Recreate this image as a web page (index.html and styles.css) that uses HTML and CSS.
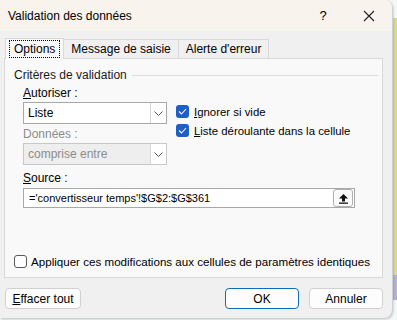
FILE: index.html
```html
<!DOCTYPE html>
<html lang="fr">
<head>
    <meta charset="UTF-8">
    <title>Validation des données</title>
    <link rel="stylesheet" href="styles.css">
</head>
<body>
    <div class="fenetre">
        <div class="titre">
            <span class="titre-texte">Validation des données</span>
            <span class="aide">?</span>
            <span class="fermer">
                <svg width="12" height="12" viewBox="0 0 12 12"><path d="M1 1L11 11M11 1L1 11" stroke="#222" stroke-width="1.1" fill="none"/></svg>
            </span>
        </div>

        <div class="corps">
            <div class="onglets">
                <div class="onglet actif"><span class="focus">Options</span></div>
                <div class="onglet">Message de saisie</div>
                <div class="onglet">Alerte d'erreur</div>
            </div>

            <div class="panneau">
                <div class="groupe">
                    <span>Critères de validation</span>
                    <div class="trait"></div>
                </div>

                <div class="ligne">
                    <div class="colonne">
                        <div class="etiquette"><u>A</u>utoriser :</div>
                        <div class="combo">
                            <span class="valeur">Liste</span>
                            <span class="fleche"><svg width="9" height="5" viewBox="0 0 9 5"><path d="M0.5 0.5L4.5 4.5L8.5 0.5" stroke="#555" fill="none"/></svg></span>
                        </div>
                        <div class="etiquette gris">Données :</div>
                        <div class="combo inactif">
                            <span class="valeur">comprise entre</span>
                            <span class="fleche"><svg width="9" height="5" viewBox="0 0 9 5"><path d="M0.5 0.5L4.5 4.5L8.5 0.5" stroke="#555" fill="none"/></svg></span>
                        </div>
                    </div>
                    <div class="cases">
                        <label class="case"><span class="coche"><svg width="9" height="7" viewBox="0 0 9 7"><path d="M1 3.5L3.5 6L8 1" stroke="#fff" stroke-width="1.1" fill="none"/></svg></span><span><u>I</u>gnorer si vide</span></label>
                        <label class="case"><span class="coche"><svg width="9" height="7" viewBox="0 0 9 7"><path d="M1 3.5L3.5 6L8 1" stroke="#fff" stroke-width="1.1" fill="none"/></svg></span><span><u>L</u>iste déroulante dans la cellule</span></label>
                    </div>
                </div>

                <div class="etiquette source-label"><u>S</u>ource :</div>
                <div class="source">
                    <span class="formule">='convertisseur temps'!$G$2:$G$361</span>
                    <span class="reduire"><svg width="11" height="11" viewBox="0 0 11 11"><path d="M5.5 1L10 5.5H7V8.5H4V5.5H1Z" fill="#111"/><rect x="1" y="9.5" width="9" height="1.3" fill="#111"/></svg></span>
                </div>

                <label class="case appliquer"><span class="coche vide"></span><span>Appliquer ces modifications aux cellules de paramètres identiques</span></label>
            </div>

            <div class="boutons">
                <button class="bouton"><u>E</u>ffacer tout</button>
                <div class="espace"></div>
                <button class="bouton defaut">OK</button>
                <button class="bouton">Annuler</button>
            </div>
        </div>
    </div>
</body>
</html>
```

FILE: styles.css
```css
body {
    margin: 0;
    width: 397px;
    height: 320px;
    overflow: hidden;
    font-family: "Liberation Sans", Arial, sans-serif;
    font-size: 11px;
    color: #000;
    background:
        linear-gradient(to bottom, transparent 18px, #d8dc8c 18px, #d8dc8c 275px, #b7b0dc 275px, #b7b0dc 300px, transparent 300px) no-repeat 393px 0 / 4px 320px,
        #f4f8f8;
}

.fenetre {
    width: 392px;
    height: 318px;
    background-color: #f0f0f0;
    border-radius: 0 8px 8px 0;
    box-shadow: 1px 1px 3px rgba(0, 0, 0, 0.25);
    overflow: hidden;
}

.titre {
    height: 31px;
    background-color: #f8f3ec;
    display: flex;
    align-items: center;
    padding-left: 8px;
}

.titre-texte {
    font-size: 12px;
    flex: 1;
}

.aide {
    font-size: 13px;
    width: 46px;
    text-align: center;
}

.fermer {
    width: 46px;
    display: flex;
    justify-content: center;
}

.corps {
    padding: 7px 9px 0 4px;
}

.onglets {
    display: flex;
    padding-left: 1px;
    height: 20px;
    align-items: flex-end;
    font-size: 12px;
}

.onglet {
    height: 18px;
    border: 1px solid #d9d9d9;
    border-bottom: none;
    border-left: none;
    padding: 0 7px;
    display: flex;
    align-items: center;
    background-color: #f0f0f0;
}

.onglet.actif {
    height: 20px;
    border-left: 1px solid #d9d9d9;
    background-color: #f9f9f9;
    margin-bottom: -1px;
    position: relative;
    padding: 0 3px;
}

.focus {
    border: 1px dotted #000;
    padding: 1px 4px;
}

.panneau {
    height: 220px;
    background-color: #f9f9f9;
    border: 1px solid #d9d9d9;
    padding: 9px 0 0 9px;
    box-sizing: border-box;
}

.groupe {
    display: flex;
    align-items: center;
    font-size: 12px;
    color: #1a1a1a;
}

.trait {
    flex: 1;
    height: 1px;
    background-color: #dcdcdc;
    margin: 1px 4px 0 5px;
}

.ligne {
    display: flex;
    padding-left: 9px;
}

.colonne {
    width: 144px;
}

.etiquette {
    font-size: 12px;
    height: 17px;
    line-height: 17px;
    margin-top: 3px;
}

.gris {
    color: #8c8c8c;
    margin-top: 2px;
}

.combo {
    height: 20px;
    border: 1px solid #a8a8a8;
    background-color: #fff;
    display: flex;
    align-items: center;
}

.combo .valeur {
    flex: 1;
    padding-left: 4px;
    font-size: 12px;
}

.combo .fleche {
    width: 15px;
    height: 20px;
    border-left: 1px solid #d6d6d6;
    display: flex;
    align-items: center;
    justify-content: center;
}

.combo.inactif {
    background-color: #eeeeee;
    border-color: #c8c8c8;
    color: #8c8c8c;
}

.combo.inactif .fleche {
    background-color: #fff;
}

.cases {
    padding: 23px 0 0 9px;
    display: flex;
    flex-direction: column;
    gap: 6px;
    font-size: 11.4px;
}

.case {
    display: flex;
    align-items: center;
    gap: 5px;
    height: 13px;
}

.coche {
    width: 13px;
    height: 13px;
    border-radius: 3px;
    background-color: #1f5fc4;
    display: flex;
    align-items: center;
    justify-content: center;
    box-sizing: border-box;
    flex: none;
}

.coche.vide {
    background-color: #fff;
    border: 1px solid #5a5a5a;
}

.source-label {
    margin: 5px 0 0 9px;
}

.source {
    margin: 1px 0 0 9px;
    width: 332px;
    height: 20px;
    border: 1px solid #a8a8a8;
    background-color: #fff;
    display: flex;
    align-items: center;
    box-sizing: border-box;
}

.formule {
    flex: 1;
    padding-left: 5px;
    font-size: 11px;
}

.reduire {
    width: 18px;
    height: 16px;
    border: 1px solid #b0b0b0;
    border-radius: 3px;
    margin-right: 1px;
    display: flex;
    align-items: center;
    justify-content: center;
    background-color: #fbfbfb;
}

.appliquer {
    margin-top: 47px;
    font-size: 11.6px;
    gap: 4px;
}

.boutons {
    display: flex;
    margin-top: 10px;
    padding-left: 1px;
    gap: 10px;
}

.espace {
    flex: 1;
}

.bouton {
    font-family: "Liberation Sans", Arial, sans-serif;
    font-size: 12px;
    height: 21px;
    width: 74px;
    border: 1px solid #d0d0d0;
    border-radius: 4px;
    background-color: #fdfdfd;
    padding: 0;
    color: #000;
}

.bouton:first-child {
    width: 76px;
}

.bouton.defaut {
    border-color: #0f6cbd;
}
```
